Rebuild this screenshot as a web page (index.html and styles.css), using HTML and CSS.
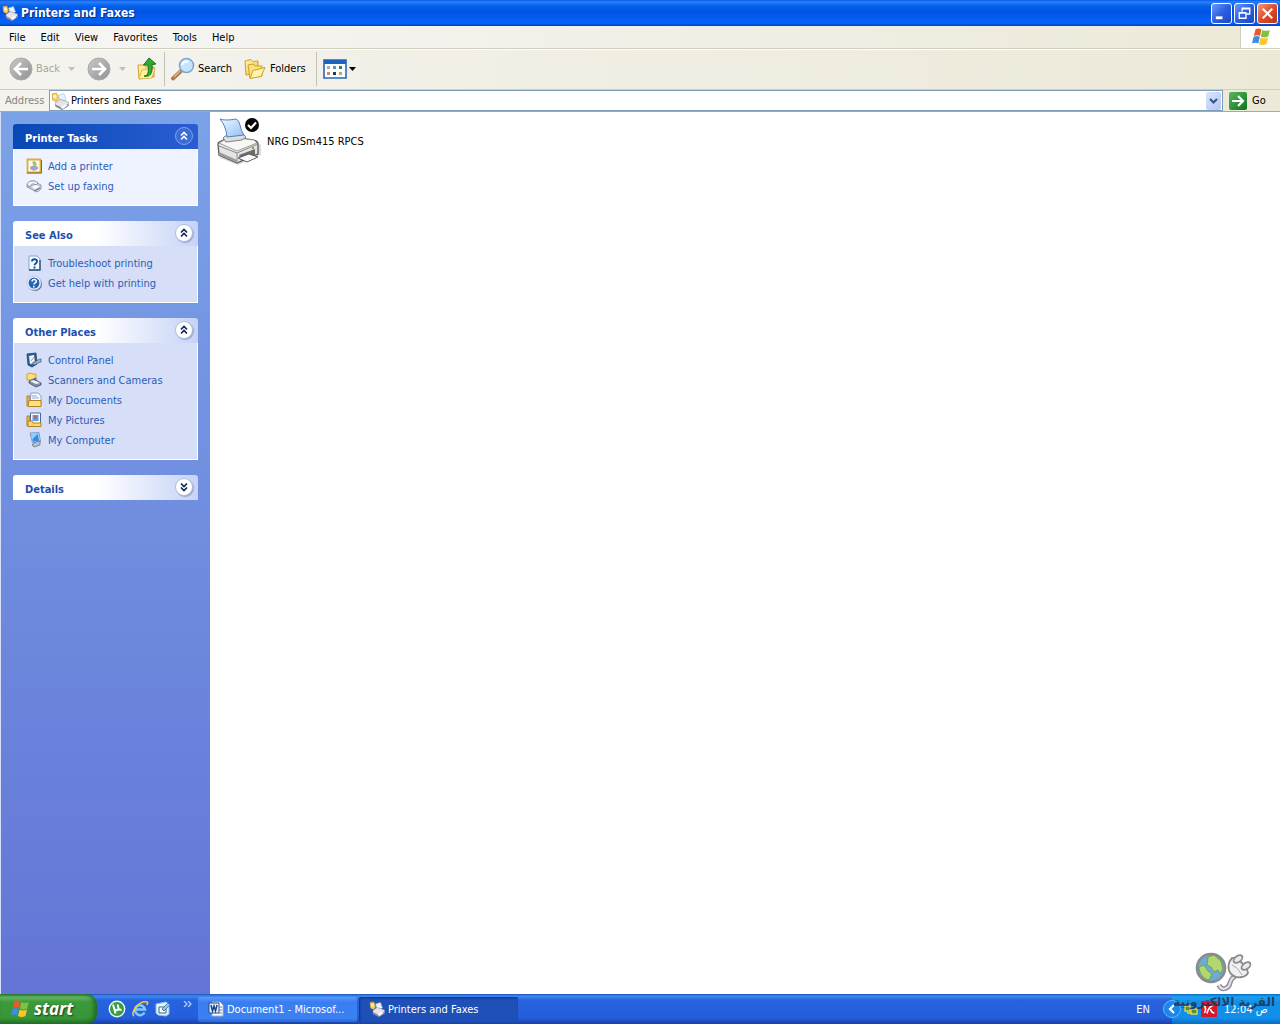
FILE: index.html
```html
<!DOCTYPE html>
<html lang="en">
<head>
<meta charset="utf-8">
<title>Printers and Faxes</title>
<link rel="stylesheet" href="styles.css">
</head>
<body>
<svg class="defs" aria-hidden="true">
  <defs>
    <linearGradient id="gray" x1="0" y1="0" x2="1" y2="1"><stop offset="0" stop-color="#c8c8c8"/><stop offset="1" stop-color="#919191"/></linearGradient>
    <linearGradient id="green" x1="0" y1="0" x2="1" y2="1"><stop offset="0" stop-color="#58b75d"/><stop offset="1" stop-color="#0d741c"/></linearGradient>
    <linearGradient id="paper" x1="0" y1="0" x2="1" y2="1"><stop offset="0" stop-color="#eef7ff"/><stop offset="1" stop-color="#8fc0f5"/></linearGradient>
    <linearGradient id="gold" x1="0" y1="0" x2="1" y2="1"><stop offset="0" stop-color="#fff6b0"/><stop offset="1" stop-color="#efc440"/></linearGradient>
    <symbol id="printer-small" viewBox="0 0 16 16">
      <path d="M6.500 3l5-1.500 2 5.500-5 2z" fill="#e8f1fc" stroke="#a6b4cc" stroke-width=".5"/>
      <path d="M4 9.500l4-3 7.500 2.500v3l-5.500 3.500-6-3z" fill="#e4e4ea" stroke="#8a8a94" stroke-width=".5"/>
      <path d="M4 11l6 3 5.500-3.500v2L10 16l-6-3z" fill="#8c8c98"/>
      <path d="M8.500 13.500l4-2.500 2 1-4 3z" fill="#fff"/>
      <path d="M1 1.500l4-.5 1.500 5-2 2.500L1.500 7z" fill="#f8cf62" stroke="#d38f22" stroke-width=".6"/>
      <circle cx="3.500" cy="4" r="1.600" fill="#fff4c2"/>
    </symbol>
    <symbol id="winflag" viewBox="0 0 20 18">
      <path d="M4.500 1.200C6.500 0 8.500.2 10.500 1.400L9 8C7 6.800 5 6.900 2.800 8z" fill="#ea5a24"/>
      <path d="M11.300 1.900c2.500 1.300 4.700 1.200 7.500 0l-1.600 6.700c-2.800 1.200-4.900 1.200-7.400-.1z" fill="#7fc241"/>
      <path d="M2.500 9c2.300-1.200 4.300-1.200 6.300.1l-1.500 6.500c-2-1.200-4-1.200-6.300-.1z" fill="#3f8be0"/>
      <path d="M9.600 9.500c2.500 1.300 4.700 1.200 7.400 0l-1.500 6.600c-2.800 1.300-5 1.300-7.500 0z" fill="#fbc52b"/>
    </symbol>
    <symbol id="chev-up" viewBox="0 0 16 16"><path d="M5 7.500l3-3 3 3M5 11.500l3-3 3 3" fill="none" stroke="currentColor" stroke-width="1.600"/></symbol>
    <symbol id="chev-down" viewBox="0 0 16 16"><path d="M5 4.500l3 3 3-3M5 8.500l3 3 3-3" fill="none" stroke="currentColor" stroke-width="1.600"/></symbol>
    <symbol id="caret" viewBox="0 0 7 4"><path d="M0 0h7L3.500 4z" fill="currentColor"/></symbol>
  </defs>
</svg>

<header class="titlebar">
  <svg class="i16"><use href="#printer-small"/></svg>
  <h1>Printers and Faxes</h1>
  <div class="winbtns">
    <button class="wb" aria-label="Minimize"><svg viewBox="0 0 20 20"><path d="M4 13h7v3H4z" fill="#fff"/></svg></button>
    <button class="wb" aria-label="Restore"><svg viewBox="0 0 20 20"><path d="M7.500 8V4.500h8v6H12M7 5h9" fill="none" stroke="#fff" stroke-width="1.400"/><path d="M4.500 9h7v6h-7zM4 9.500h8" fill="none" stroke="#fff" stroke-width="1.400"/></svg></button>
    <button class="wb close" aria-label="Close"><svg viewBox="0 0 20 20"><path d="M5 5l10 10M15 5L5 15" stroke="#fff" stroke-width="2.200"/></svg></button>
  </div>
</header>

<div class="menurow">
  <nav class="menu">
    <button>File</button><button>Edit</button><button>View</button><button>Favorites</button><button>Tools</button><button>Help</button>
  </nav>
  <div class="brand"><svg width="20" height="18"><use href="#winflag"/></svg></div>
</div>

<div class="toolbar">
  <button class="tool back" disabled>
    <svg class="i24" viewBox="0 0 24 24"><circle cx="12" cy="12" r="11" fill="url(#gray)" stroke="#aaa"/><path d="M19 12H7M12 6l-6 6 6 6" fill="none" stroke="#fff" stroke-width="2.600"/></svg>
    <span>Back</span><svg class="caret"><use href="#caret"/></svg>
  </button>
  <button class="tool forward" disabled aria-label="Forward">
    <svg class="i24" viewBox="0 0 24 24"><circle cx="12" cy="12" r="11" fill="url(#gray)" stroke="#aaa"/><path d="M5 12h12M12 6l6 6-6 6" fill="none" stroke="#fff" stroke-width="2.600"/></svg>
    <svg class="caret"><use href="#caret"/></svg>
  </button>
  <button class="tool up" aria-label="Up">
    <svg class="i24" viewBox="0 0 24 24"><path d="M3 8h6l2 2h8v10L4 22z" fill="url(#gold)" stroke="#d0a234"/><path d="M4 22l3-9 13-2-3 10z" fill="#fff0a0" stroke="#d8ae40" stroke-width=".8"/><path d="M9 19c4 0 5-4 4-11H8.500L14 1l7 6-4 .5c1 9-2 13-8 11.500z" fill="#35a832" stroke="#16751a"/></svg>
  </button>
  <div class="sep"></div>
  <button class="tool">
    <svg class="i24" viewBox="0 0 24 24"><path d="M10 14l-8 7.500" stroke="#b57849" stroke-width="3.800" stroke-linecap="round"/><path d="M9 14l-6 6" stroke="#e8b990" stroke-width="1.200"/><circle cx="15.500" cy="8.500" r="7" fill="#c4e6fb" stroke="#7da6d4" stroke-width="1.600"/><path d="M11 8c1-3 3-4 6-3" fill="none" stroke="#fff" stroke-width="2"/></svg>
    <span>Search</span>
  </button>
  <button class="tool folders">
    <svg class="i24" viewBox="0 0 24 24"><path d="M2 4l6-1.500 2 2 5-.5V16L3 18z" fill="url(#gold)" stroke="#cf9e2c"/><path d="M5 8l5-1 2 2h7v10l-12 2z" fill="#fae27c" stroke="#cf9e2c"/><path d="M7 21.500l3-8 12-3-4 9z" fill="#fff3a8" stroke="#cf9e2c"/></svg>
    <span>Folders</span>
  </button>
  <div class="sep"></div>
  <button class="tool views" aria-label="Views">
    <svg class="i24" viewBox="0 0 24 24"><path d="M1 3h22v18H1z" fill="#fff" stroke="#2868b8" stroke-width="1.600"/><path d="M1 3h22v4H1z" fill="#1d62bd"/><path d="M4 9h3v3H4z" fill="#aaa"/><path d="M10 9h3v3h-3z" fill="#5597c6"/><path d="M16 9h3v3h-3z" fill="#32864b"/><path d="M4 15h3v3H4z" fill="#dd8a45"/><path d="M10 15h3v3h-3z" fill="#143c82"/><path d="M16 15h3v3h-3z" fill="#b9a76b"/></svg>
    <svg class="caret"><use href="#caret"/></svg>
  </button>
</div>

<form class="address">
  <label for="addr">Address</label>
  <div class="combo">
    <svg class="i18"><use href="#printer-small"/></svg>
    <input id="addr" type="text" value="Printers and Faxes">
    <button type="button" aria-label="Show addresses"><svg viewBox="0 0 15 18"><path d="M4 7l3.500 3.500L11 7" fill="none" stroke="#3c5485" stroke-width="2.200"/></svg></button>
  </div>
  <button type="button" class="go"><svg class="i18" viewBox="0 0 18 18"><rect width="18" height="18" rx="2" fill="url(#green)"/><path d="M3 9h10M9 4l5 5-5 5" fill="none" stroke="#fff" stroke-width="2.200"/></svg><span>Go</span></button>
</form>

<main class="content">
  <aside class="side">
    <section class="panel primary">
      <header><h2>Printer Tasks</h2><button aria-label="Collapse Printer Tasks"><svg><use href="#chev-up"/></svg></button></header>
      <ul>
        <li><a href="#"><svg class="i16" viewBox="0 0 16 16"><path d="M1.500 1.500h13v13h-13z" fill="#fffbe6" stroke="#d9ae40" stroke-width="1.800"/><path d="M1 15h14.500V2" fill="none" stroke="#87631d"/><path d="M4 9l4-2 4 2v2l-4 2-4-2z" fill="#a9a3c4"/><path d="M6 4l3-1 2 4-3 1z" fill="#9cbf7c"/></svg>Add a printer</a></li>
        <li><a href="#"><svg class="i16" viewBox="0 0 16 16"><path d="M1 7l6-4 8 4v4l-4 3-10-5z" fill="#cfcfe0" stroke="#8583a0" stroke-width=".8"/><path d="M1 7c0-4 7-6 11-2l-2 2C7 5 5 6 4 9z" fill="#f2f2fa" stroke="#77749b" stroke-width=".8"/><path d="M6 9l4-2 3 2-4 2z" fill="#fff"/><path d="M8 13l6-3" stroke="#5b6b7e"/></svg>Set up faxing</a></li>
      </ul>
    </section>
    <section class="panel">
      <header><h2>See Also</h2><button aria-label="Collapse See Also"><svg><use href="#chev-up"/></svg></button></header>
      <ul>
        <li><a href="#"><svg class="i16" viewBox="0 0 16 16"><path d="M3 1h8l3 3v11H3z" fill="#f5faff" stroke="#7fa3cf"/><path d="M3 15h11V5" fill="none" stroke="#28517f" stroke-width="1.400"/><path d="M6 6.500c0-3 5-3 5 0 0 2-2.500 1.800-2.500 3.700M8.500 11.500v2" fill="none" stroke="#174e97" stroke-width="1.900"/></svg>Troubleshoot printing</a></li>
        <li><a href="#"><svg class="i16" viewBox="0 0 16 16"><circle cx="9" cy="9" r="7" fill="#50698f"/><circle cx="8" cy="8" r="7" fill="#fff" stroke="#b6c6df"/><circle cx="8" cy="8" r="5.500" fill="#2464b7"/><path d="M6 6.500c.3-3 4.500-2.500 4.300 0C10 8 8 8 8 9.500M7.800 10.800v1.700" fill="none" stroke="#fff" stroke-width="1.500"/></svg>Get help with printing</a></li>
      </ul>
    </section>
    <section class="panel">
      <header><h2>Other Places</h2><button aria-label="Collapse Other Places"><svg><use href="#chev-up"/></svg></button></header>
      <ul>
        <li><a href="#"><svg class="i16" viewBox="0 0 16 16"><path d="M1 2l9-1 1 11-5 3-4-2z" fill="#2c5f9d" stroke="#173f70" stroke-width=".8"/><path d="M3 4l5-1 1 8-5 1z" fill="#ecf6ff"/><path d="M5 9l3-4" stroke="#df8d35"/><path d="M7 10c3 1 4-3 8-3v3c-3 0-4 3-8 3z" fill="#9db1c6" stroke="#40566e" stroke-width=".7"/></svg>Control Panel</a></li>
        <li><a href="#"><svg class="i16" viewBox="0 0 16 16"><path d="M1 2l4-1 1 1h4v6H1z" fill="#ffdf70" stroke="#ca9326" stroke-width=".8"/><path d="M3 9l5-2 7 4v2l-5 2-7-4z" fill="#8291a8" stroke="#3f4d66" stroke-width=".8"/><path d="M4 9l6 3 4-1-6-3z" fill="#eef2f8"/><circle cx="9" cy="7" r="1.500" fill="#5d7290"/></svg>Scanners and Cameras</a></li>
        <li><a href="#"><svg class="i16" viewBox="0 0 16 16"><path d="M1 4h3v10H1z" fill="#eab54d" stroke="#b9801f"/><path d="M5 1h7l3 3v9H4z" fill="#f6fbff" stroke="#748fb5" stroke-width=".8"/><path d="M6 4h5M6 6h7" stroke="#93add1"/><path d="M2 14.500l1-6h12v6z" fill="#ffe38a" stroke="#b9801f"/></svg>My Documents</a></li>
        <li><a href="#"><svg class="i16" viewBox="0 0 16 16"><path d="M1 4h3v10H1z" fill="#eab54d" stroke="#b9801f"/><path d="M4.500 1h10v11h-10z" fill="#f6fbff" stroke="#496a9a"/><path d="M6.500 3h6v6h-6z" fill="#5b9ce3"/><circle cx="9.500" cy="5" r="1.500" fill="#d95c43"/><path d="M2 14.500V9h4l1 2h8v3.500z" fill="#ffd867" stroke="#b9801f"/></svg>My Pictures</a></li>
        <li><a href="#"><svg class="i16" viewBox="0 0 16 16"><path d="M4 1l9-.5 1.500 9-8 1.500z" fill="#b9dcff" stroke="#6c8cbb" stroke-width=".8"/><path d="M5 2l7-.3 1 7-6 1z" fill="#318be9"/><path d="M5 2l7-.3-6 6z" fill="#91cbff"/><path d="M10 10l4-1v4l-6 2-2-2z" fill="#b9c3d0" stroke="#59677a" stroke-width=".7"/></svg>My Computer</a></li>
      </ul>
    </section>
    <section class="panel">
      <header><h2>Details</h2><button aria-label="Expand Details"><svg><use href="#chev-down"/></svg></button></header>
    </section>
  </aside>
  <section class="files">
    <a class="device" href="#">
      <svg width="48" height="48" viewBox="0 0 48 48">
        <path d="M3 28l39-2 3 2v10L22 48 4 41z" fill="#888" opacity=".3"/>
        <path d="M2 27q0-2 3-3l9-4 23 3q5 1 5 4v10L21 46 3 38z" fill="#e4e4e3" stroke="#5b5b5b" stroke-width="1.300"/>
        <path d="M3 26l11-6 24 3 3 3-20 8z" fill="#f7f7f5" stroke="#8a8a8a" stroke-width=".8"/>
        <path d="M3 29l18 7 21-9M21 36v10" fill="none" stroke="#8b8b8b"/>
        <path d="M7 21l2-2 18-2 3 3-4 3-16 2z" fill="#dedede" stroke="#777" stroke-width=".9"/>
        <path d="M4 2q5 2 16 0 3 1 4 6 1 6 4 10l-17 2Q10 9 4 2z" fill="url(#paper)" stroke="#587ebd"/>
        <path d="M3 35l18 8v3L3 38z" fill="#9a9a9a"/>
        <path d="M23 38l16-6v6l-14 6z" fill="#6b6b6b"/>
        <path d="M22 41l11-4 9 3-11 5z" fill="#fafafa" stroke="#545454" stroke-width=".9"/>
        <circle cx="37" cy="31" r="1.200" fill="#71b341"/>
        <circle cx="36" cy="8" r="7" fill="#050505"/><path d="M32 8l3 3 5-5.500" fill="none" stroke="#fff" stroke-width="2.200"/>
      </svg>
      <span>NRG DSm415 RPCS</span>
    </a>
  </section>
</main>

<footer class="taskbar">
  <button class="start"><svg width="20" height="18"><use href="#winflag"/></svg><span>start</span></button>
  <div class="quick">
    <a href="#" aria-label="uTorrent"><svg class="i18" viewBox="0 0 18 18"><circle cx="9" cy="9" r="7.700" fill="#369d45" stroke="#e9f8e9" stroke-width="1.400"/><path d="M5 4.500l2.500 9M6 8c.5 3 4.500 3 4.500 0L9.500 4.500M10.500 8c.5 2 1.500 2 3 1.500" fill="none" stroke="#fff" stroke-width="1.900"/></svg></a>
    <a href="#" aria-label="Internet Explorer"><svg class="i18" viewBox="0 0 18 18"><path d="M13.500 12.500A5 5 0 1 1 14 9.500H5" fill="none" stroke="#7fc8ff" stroke-width="2.500"/><path d="M3 16C-1 13 8 0 16 2c1.500 1 0 2 0 3" fill="none" stroke="#f6c844" stroke-width="1.600"/></svg></a>
    <a href="#" aria-label="Show Desktop"><svg class="i18" viewBox="0 0 18 18"><path d="M2 4l10-2 3 2v10l-3 2-8-1-2-2z" fill="#e9f3fb" stroke="#8cc0e6"/><path d="M5 7h7v6H5z" fill="#fff" stroke="#35658e"/><path d="M8 9l6-6 2 2-6 6z" fill="#8ccbed" stroke="#2f6a98" stroke-width=".8"/></svg></a>
    <button class="more" aria-label="More"><svg width="9" height="6" viewBox="0 0 9 6"><path d="M1 0l3 3-3 3M5 0l3 3-3 3" fill="none" stroke="#b5d2ff" stroke-width="1.200"/></svg></button>
  </div>
  <div class="tasks">
    <button class="task"><svg class="i16" viewBox="0 0 16 16"><path d="M4 1h8l3 3v11H4z" fill="#fff" stroke="#9eb2ce"/><path d="M11 6h3M11 9h3M11 12h3" stroke="#5d7fb4"/><path d="M1 2h10v10H1z" fill="#e7effb" stroke="#244f94"/><path d="M3 4l1.500 6L6 5l1.500 5L9 4" fill="none" stroke="#1c4489" stroke-width="1.500"/></svg><span>Document1 - Microsof...</span></button>
    <button class="task active"><svg class="i16"><use href="#printer-small"/></svg><span>Printers and Faxes</span></button>
  </div>
  <button class="lang">EN</button>
  <div class="tray">
    <button class="expand" aria-label="Show hidden icons"><svg class="i18" viewBox="0 0 18 18"><circle cx="9" cy="9" r="8.500" fill="#1d86ea" stroke="#63b5fa"/><path d="M11 5L7 9l4 4" fill="none" stroke="#fff" stroke-width="2.200"/></svg></button>
    <svg class="i16" viewBox="0 0 16 16"><path d="M2 5h5v5H2zM8 8h6v5H8zM4 12h5" fill="#55903b" stroke="#e4d445" stroke-width="1.400"/></svg>
    <svg class="i16" viewBox="0 0 16 16"><rect width="16" height="16" rx="1" fill="#d6192b"/><path d="M2.500 4.500C5 5 5 9 3.500 12M13 4C9 5 7 8 6 12.500M13.500 12C11 12 10 10 9.500 8" fill="none" stroke="#fff" stroke-width="1.600"/></svg>
    <time>12:04 ص</time>
  </div>
</footer>

<div class="watermark">
  <svg width="58" height="42" viewBox="0 0 58 42">
    <circle cx="16" cy="18" r="14" fill="#4fa0cb" stroke="#777" stroke-width="2.600"/>
    <path d="M13 7l6-2 7 6 2 8-3 5-2-4-4 2-3-5-4-2zM4 17l5-2 4 6 4 3-3 6C8 29 4 23 4 17z" fill="#a6cf55" stroke="#608a48"/>
    <path d="M24 35c3 7 10 3 11-2 1-4 3-6 6-7" fill="none" stroke="#777482" stroke-width="5"/>
    <path d="M24 35c3 7 10 3 11-2 1-4 3-6 6-7" fill="none" stroke="#dedbe7" stroke-width="2.200"/>
    <path d="M37 8c5-1 15 8 16 15-3 5-12 6-17 1-4-5-3-12 1-16z" fill="#eeeef2" stroke="#777" stroke-width="1.800"/>
    <ellipse cx="43" cy="9" rx="5" ry="3" transform="rotate(-35 43 9)" fill="#dfeaec" stroke="#777" stroke-width="1.800"/>
    <ellipse cx="51" cy="16" rx="5" ry="3" transform="rotate(-35 51 16)" fill="#dfeaec" stroke="#777" stroke-width="1.800"/>
    <path d="M37 15q6 2 10 10" fill="none" stroke="#999"/>
  </svg>
  <span lang="ar" dir="rtl">القرية الالكترونية</span>
</div>
</body>
</html>
```
FILE: styles.css
```css
* { box-sizing: border-box; }
body {
  margin: 0;
  min-height: 100vh;
  display: flex;
  flex-direction: column;
  position: relative;
  background: #fff;
  color: #000;
  font: 11px/15px "DejaVu Sans Condensed", "Noto Sans", sans-serif;
}
button, input { font: inherit; color: inherit; border: 0; padding: 0; background: none; }
h1, h2, ul { margin: 0; padding: 0; }
ul { list-style: none; }
a { color: inherit; text-decoration: none; }
svg { display: block; flex: none; }
.defs { position: absolute; width: 0; height: 0; }
.i16 { width: 16px; height: 16px; }
.i18 { width: 18px; height: 18px; }
.i24 { width: 24px; height: 24px; }
.caret { width: 7px; height: 4px; }

.titlebar {
  display: flex;
  align-items: center;
  gap: 3px;
  height: 26px;
  padding: 0 2px;
  background: linear-gradient(#0a5be8 0, #2a80f8 2px, #0560ec 6px, #0054e3 12px, #0560f4 20px, #0463fa 23px, #0040c0 26px);
}
.titlebar h1 {
  flex: 1;
  color: #fff;
  font: bold 12px/16px "DejaVu Sans Condensed", "Noto Sans", sans-serif;
  text-shadow: 1px 1px 1px #0a2a80;
}
.winbtns { display: flex; gap: 2px; }
.wb {
  width: 21px;
  height: 21px;
  border: 1px solid #fff;
  border-radius: 3px;
  background: linear-gradient(135deg, #6f98f5, #2c5fe0 50%, #1c49c4);
}
.wb svg { width: 19px; height: 19px; }
.wb.close { background: linear-gradient(135deg, #f09a80, #dc4d2b 50%, #b93512); }

.menurow { display: flex; height: 23px; border-bottom: 1px solid #d0cdbc; background: linear-gradient(90deg, #f6f6f5, #ece9d8); }
.menu { flex: 1; display: flex; padding-left: 1px; }
.menu button { padding: 0 7px 0 8px; }
.brand { width: 40px; display: flex; align-items: center; justify-content: center; background: #fff; border-left: 1px solid #d0cdbc; }

.toolbar {
  display: flex;
  align-items: center;
  height: 41px;
  padding: 0 9px 2px;
  border-top: 1px solid #fff;
  border-bottom: 1px solid #d0cdbc;
  background: linear-gradient(90deg, #f4f3ee, #ece9d8);
}
.tool { display: flex; align-items: center; gap: 3px; }
.tool:disabled { color: #a8a79c; }
.tool:disabled .caret { color: #c3c1b6; }
.back { width: 78px; }
.back .caret { margin-left: 5px; }
.forward { width: 48px; gap: 8px; }
.sep { width: 1px; height: 34px; margin: 0 6px; background: #c5c2b2; }
.up + .sep { margin-left: 5px; }
.folders { margin: 0 4px 0 11px; }
.sep + .views { gap: 2px; }

.address {
  display: flex;
  align-items: center;
  height: 22px;
  padding-left: 5px;
  border-bottom: 1px solid #aaa898;
  background: linear-gradient(90deg, #f4f3ee, #ece9d8);
}
.address label { width: 44px; color: #85847b; }
.combo { flex: 1; display: flex; align-items: center; height: 21px; padding: 0 1px; border: 1px solid #7f9db9; background: #fff; }
.combo input { flex: 1; min-width: 0; padding-left: 2px; outline: 0; }
.combo button { width: 15px; height: 18px; border-radius: 2px; background: linear-gradient(135deg, #d8e4fd, #b3c8f4); }
.go { display: flex; align-items: center; gap: 5px; width: 57px; padding-left: 6px; }

.content { flex: 1; display: flex; }
.side {
  width: 210px;
  display: flex;
  flex-direction: column;
  gap: 15px;
  padding: 12px;
  border-left: 1px solid #d6dff7;
  background: linear-gradient(#7ba2e7, #6375d6);
}
.panel header {
  display: flex;
  align-items: center;
  justify-content: space-between;
  height: 25px;
  padding: 0 5px 0 12px;
  border-radius: 3px 3px 0 0;
  background: linear-gradient(90deg, #fff 45%, #c6d3f7);
}
.panel h2 { padding-top: 4px; color: #1c4fb0; font: bold 11px/15px "DejaVu Sans Condensed", "Noto Sans", sans-serif; }
.panel header button {
  width: 18px;
  height: 18px;
  margin-bottom: 2px;
  border: 1px solid #b0bede;
  border-radius: 9px;
  color: #10235c;
  background: #fff;
  box-shadow: 1px 1px 1px #9aa8cc;
}
.panel header svg { width: 16px; height: 16px; }
.panel ul { padding: 7px 12px 9px; border: 1px solid #fff; border-top: 0; background: #d6dff7; color: #2a5db8; }
.panel a { display: flex; align-items: center; gap: 6px; height: 20px; }
.primary header { background: linear-gradient(90deg, #0849b5, #2a5dd2); }
.primary h2 { color: #fff; }
.primary header button { border-color: #7fa2ee; color: #fff; background: #3a6cd8; box-shadow: none; }
.primary ul { background: #eff3ff; }
.files { flex: 1; padding: 5px 6px; }
.device { display: inline-flex; align-items: center; gap: 3px; }

.taskbar {
  display: flex;
  align-items: stretch;
  height: 30px;
  color: #fff;
  background: linear-gradient(#1f4fb8 0, #3e8af3 2px, #2863de 6px, #245edb 24px, #1941a5 30px);
}
.start {
  display: flex;
  align-items: center;
  gap: 4px;
  width: 97px;
  padding-left: 10px;
  border-radius: 0 10px 10px 0;
  background: linear-gradient(#2f7a2f 0, #66b866 3px, #3c993c 8px, #379637 24px, #26702a 30px);
  box-shadow: inset -3px 0 4px #1f6a24;
  font: italic bold 17px/22px "Open Sans", sans-serif;
  text-shadow: 1px 1px 2px #173f17;
}
.quick { display: flex; align-items: center; gap: 5px; width: 101px; padding-left: 11px; }
.more { align-self: flex-start; padding: 7px 0 0 6px; }
.tasks { flex: 1; display: flex; align-items: center; gap: 2px; }
.task {
  display: flex;
  align-items: center;
  gap: 3px;
  width: 159px;
  height: 25px;
  padding-left: 10px;
  border-radius: 2px;
  background: linear-gradient(#5b9bfb, #3a7df0 5px, #3b81f3 21px, #2d67d3);
}
.task.active { background: #1e50b8; box-shadow: inset 1px 1px 2px #0f3480; }
.lang { width: 36px; padding-right: 22px; }
.tray {
  display: flex;
  align-items: center;
  gap: 2px;
  width: 108px;
  background: linear-gradient(#0f6cc8 0, #1ba2f2 3px, #1290e9 8px, #118deb 24px, #0d6bc0 30px);
}
.tray .expand { margin-left: -9px; }
.tray time { margin-left: 5px; white-space: nowrap; }

.watermark {
  position: absolute;
  right: 5px;
  bottom: 12px;
  display: flex;
  flex-direction: column;
  align-items: center;
  color: #26304a;
  font: bold 12px/20px "DejaVu Sans", sans-serif;
  opacity: .85;
  pointer-events: none;
}
```
